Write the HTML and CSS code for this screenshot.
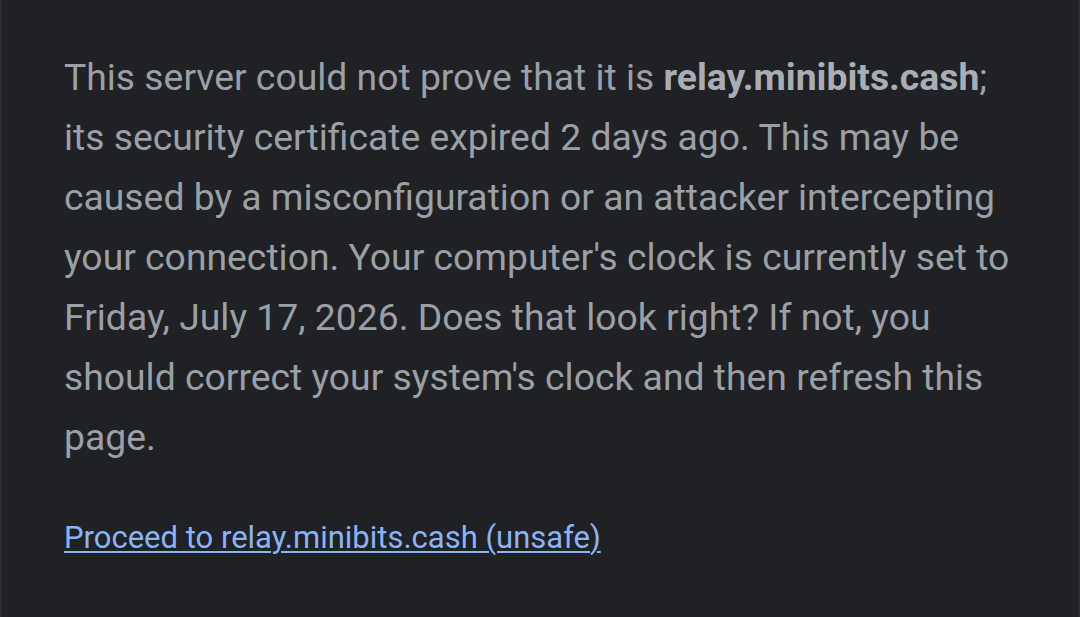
FILE: index.html
```html
<!DOCTYPE html>
<html lang="en">
<head>
<meta charset="utf-8">
<link rel="stylesheet" href="styles.css">
<title>Privacy error</title>
</head>
<body>
<main class="page">
  <p class="explanation">This server could not prove that it is <strong>relay.minibits.cash</strong>; its security certificate expired 2 days ago. This may be caused by a misconfiguration or an attacker intercepting your connection. Your computer's clock is currently set to Friday, July 17, 2026. Does that look right? If not, you should correct your system's clock and then refresh this page.</p>
  <p class="proceed"><a href="#" class="proceed-link">Proceed to relay.minibits.cash (unsafe)</a></p>
</main>
</body>
</html>
```

FILE: styles.css
```css
html, body {
  margin: 0;
  padding: 0;
  height: 100%;
  background: #202124;
}
body {
  font-family: Roboto, "Noto Sans", "Liberation Sans", sans-serif;
  color: #9aa0a6;
  overflow: hidden;
}
.page {
  box-sizing: border-box;
  height: 100%;
  padding: 47px 62px 0 62px;
  border-left: 2px solid #292a2e;
  border-right: 2px solid #292a2e;
  background: #202124;
}
.explanation {
  margin: 0;
  font-size: 37.3px;
  line-height: 60px;
  max-width: 960px;
}
.explanation strong {
  font-weight: 700;
  color: #a9aeb4;
}
.proceed {
  margin: 51px 0 0 0;
  font-size: 31px;
  line-height: 40px;
}
.proceed-link {
  color: #8ab4f8;
  text-decoration: underline;
  text-decoration-thickness: 2px;
  text-underline-offset: 3px;
}
```
